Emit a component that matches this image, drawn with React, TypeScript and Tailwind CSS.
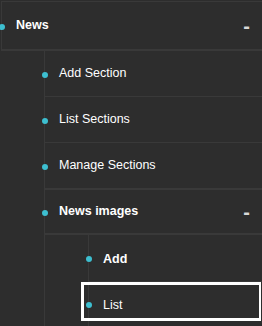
import React from "react";

const Dot = () => (
  <span className="absolute left-[-3px] top-1/2 -translate-y-[calc(50%-1px)] w-[6px] h-[6px] rounded-full bg-[#3dbfd0]" />
);

const Dash = () => (
  <span className="ml-auto mr-[12px] font-bold text-[20px] leading-none text-[#d8d8d8]">-</span>
);

export default function App() {
  return (
    <div className="w-[262px] h-[326px] overflow-hidden bg-[#2d2d2d] pt-px pl-px font-['Liberation_Sans',Arial,sans-serif] text-[12.5px] text-white">
      <ul>
        <li>
          <div className="relative flex items-center h-[50px] border-t border-l border-b-2 border-[#393939] pl-[14px]">
            <Dot />
            <span className="font-bold">News</span>
            <Dash />
          </div>
          <ul className="ml-[43px] border-l border-[#393939]">
            <li className="border-b border-[#393939]">
              <div className="relative flex items-center h-[45px] pl-[14px]">
                <Dot />
                <span>Add Section</span>
              </div>
            </li>
            <li className="border-b border-[#393939]">
              <div className="relative flex items-center h-[45px] pl-[14px]">
                <Dot />
                <span>List Sections</span>
              </div>
            </li>
            <li className="border-b border-[#393939]">
              <div className="relative flex items-center h-[45px] pl-[14px]">
                <Dot />
                <span>Manage Sections</span>
              </div>
            </li>
            <li>
              <div className="relative flex items-center h-[46px] border-t border-b-2 border-[#393939] pl-[14px]">
                <Dot />
                <span className="font-bold">News images</span>
                <Dash />
              </div>
              <ul className="ml-[43px] border-l border-[#393939]">
                <li className="border-b border-[#393939]">
                  <div className="relative flex items-center h-[46px] pt-[3px] pl-[14px]">
                    <Dot />
                    <span className="font-bold">Add</span>
                  </div>
                </li>
                <li className="relative">
                  <div className="absolute left-[-8px] right-[1px] top-0 h-[39px] border-[3px] border-r-2 border-white" />
                  <div className="relative flex items-center h-[44px] pt-[2px] pl-[14px]">
                    <Dot />
                    <span>List</span>
                  </div>
                </li>
              </ul>
            </li>
          </ul>
        </li>
      </ul>
    </div>
  );
}
